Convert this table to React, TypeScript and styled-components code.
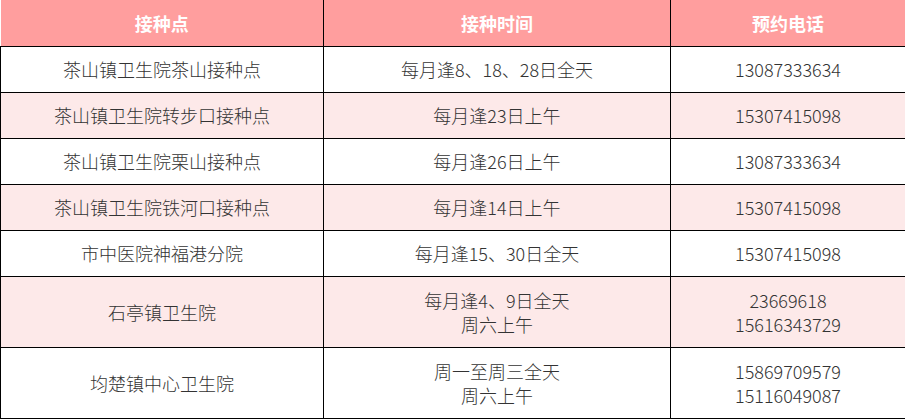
import styled, { createGlobalStyle } from 'styled-components';

const GlobalStyle = createGlobalStyle`
  html, body {
    margin: 0;
    padding: 0;
    background: #ffffff;
  }
  body {
    font-family: "Noto Sans CJK SC", "Noto Sans", sans-serif;
  }
`;

const Table = styled.table`
  width: 905px;
  border-collapse: collapse;
  table-layout: fixed;
  font-size: 18px;
  font-weight: 300;
  color: #333333;
`;

const HeadCell = styled.th<{ w: number }>`
  width: ${({ w }) => w}px;
  height: 46px;
  box-sizing: border-box;
  padding: 0;
  background: #ff9e9e;
  color: #ffffff;
  font-weight: 700;
  text-align: center;
  border-right: 1px solid #000;
  border-bottom: 1px solid #000;
`;

const Row = styled.tr<{ alt: boolean; tall: boolean }>`
  height: ${({ tall }) => (tall ? 71 : 46)}px;
  background: ${({ alt }) => (alt ? '#fde9e9' : '#ffffff')};
`;

const Cell = styled.td`
  padding: 0;
  box-sizing: border-box;
  text-align: center;
  line-height: 24px;
  border-right: 1px solid #000;
  border-bottom: 1px solid #000;

  &:first-child {
    border-left: 1px solid #000;
  }
`;

type Site = { name: string; time: string[]; phone: string[] };

const SITES: Site[] = [
  { name: '茶山镇卫生院茶山接种点', time: ['每月逢8、18、28日全天'], phone: ['13087333634'] },
  { name: '茶山镇卫生院转步口接种点', time: ['每月逢23日上午'], phone: ['15307415098'] },
  { name: '茶山镇卫生院栗山接种点', time: ['每月逢26日上午'], phone: ['13087333634'] },
  { name: '茶山镇卫生院铁河口接种点', time: ['每月逢14日上午'], phone: ['15307415098'] },
  { name: '市中医院神福港分院', time: ['每月逢15、30日全天'], phone: ['15307415098'] },
  { name: '石亭镇卫生院', time: ['每月逢4、9日全天', '周六上午'], phone: ['23669618', '15616343729'] },
  { name: '均楚镇中心卫生院', time: ['周一至周三全天', '周六上午'], phone: ['15869709579', '15116049087'] },
];

function Lines({ items }: { items: string[] }) {
  return (
    <>
      {items.map((t) => (
        <div key={t}>{t}</div>
      ))}
    </>
  );
}

export default function App() {
  return (
    <>
      <GlobalStyle />
      <Table>
        <thead>
          <tr>
            <HeadCell w={323}>接种点</HeadCell>
            <HeadCell w={347}>接种时间</HeadCell>
            <HeadCell w={235}>预约电话</HeadCell>
          </tr>
        </thead>
        <tbody>
          {SITES.map((s, i) => (
            <Row key={s.name} alt={i % 2 === 1} tall={s.time.length > 1}>
              <Cell>{s.name}</Cell>
              <Cell>
                <Lines items={s.time} />
              </Cell>
              <Cell>
                <Lines items={s.phone} />
              </Cell>
            </Row>
          ))}
        </tbody>
      </Table>
    </>
  );
}
